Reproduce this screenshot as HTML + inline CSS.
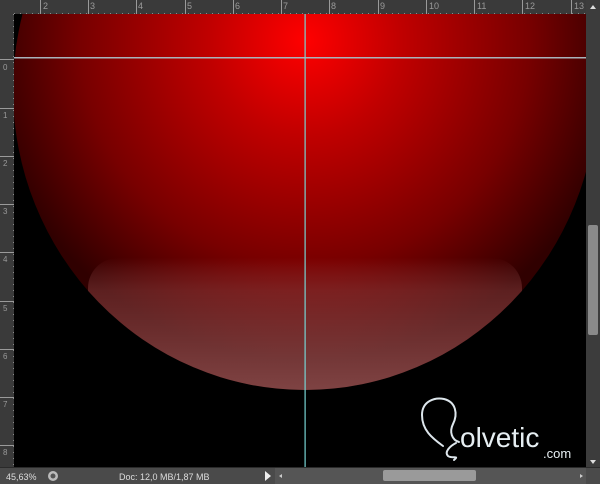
<!DOCTYPE html>
<html><head><meta charset="utf-8"><style>
html,body{margin:0;padding:0;width:600px;height:484px;overflow:hidden;background:#000;font-family:"Liberation Sans",sans-serif}
</style></head><body>
<svg width="600" height="484" viewBox="0 0 600 484" xmlns="http://www.w3.org/2000/svg" style="position:absolute;left:0;top:0">
<defs>
<radialGradient id="rg" cx="305" cy="40" r="320" gradientUnits="userSpaceOnUse">
<stop offset="0" stop-color="#ff0000"/>
<stop offset="0.3" stop-color="#c00000"/>
<stop offset="0.7" stop-color="#780000"/>
<stop offset="1" stop-color="#300000"/>
</radialGradient>
<linearGradient id="ov" x1="0" y1="258" x2="0" y2="390" gradientUnits="userSpaceOnUse">
<stop offset="0" stop-color="#c06060" stop-opacity="0"/>
<stop offset="0.25" stop-color="#a05050" stop-opacity="0.4"/>
<stop offset="1" stop-color="#a06060" stop-opacity="0.7"/>
</linearGradient>
<clipPath id="cc"><rect x="14" y="14" width="572" height="453"/></clipPath>
<clipPath id="el"><ellipse cx="305" cy="90" rx="292" ry="300"/></clipPath>
</defs>
<rect x="14" y="14" width="572" height="453" fill="#000"/>
<g clip-path="url(#cc)">
<ellipse cx="305" cy="90" rx="292" ry="300" fill="url(#rg)"/>
<g clip-path="url(#el)">
<rect x="88" y="258" width="434" height="140" rx="30" fill="url(#ov)"/>
</g>
</g>
<rect x="14" y="57" width="572" height="1.5" fill="#a8b4bc"/>
<rect x="304.5" y="14" width="1.2" height="453" fill="#77d4d4"/>
<rect x="0" y="0" width="600" height="14" fill="#3a3a3a"/>
<rect x="0" y="0" width="14" height="484" fill="#3a3a3a"/>
<g fill="#9a9a9a" font-size="9">
<text x="43" y="9">2</text><text x="90" y="9">3</text><text x="138" y="9">4</text><text x="187" y="9">5</text><text x="235" y="9">6</text><text x="283" y="9">7</text><text x="331" y="9">8</text><text x="380" y="9">9</text><text x="429" y="9">10</text><text x="477" y="9">11</text><text x="525" y="9">12</text><text x="574" y="9">13</text>
</g>
<g stroke="#8a8a8a" stroke-width="1">
<line x1="14" y1="13.5" x2="586" y2="13.5" stroke-dasharray="1 5"/>
<line x1="13.5" y1="14" x2="13.5" y2="467" stroke-dasharray="1 5"/>
</g>
<g stroke="#9a9a9a">
<line x1="40.5" y1="0" x2="40.5" y2="14"/><line x1="88.5" y1="0" x2="88.5" y2="14"/><line x1="136.5" y1="0" x2="136.5" y2="14"/><line x1="185.5" y1="0" x2="185.5" y2="14"/><line x1="233.5" y1="0" x2="233.5" y2="14"/><line x1="281.5" y1="0" x2="281.5" y2="14"/><line x1="329.5" y1="0" x2="329.5" y2="14"/><line x1="378.5" y1="0" x2="378.5" y2="14"/><line x1="426.5" y1="0" x2="426.5" y2="14"/><line x1="474.5" y1="0" x2="474.5" y2="14"/><line x1="522.5" y1="0" x2="522.5" y2="14"/><line x1="571.5" y1="0" x2="571.5" y2="14"/>
<line x1="0" y1="59.5" x2="14" y2="59.5"/><line x1="0" y1="108.5" x2="14" y2="108.5"/><line x1="0" y1="156.5" x2="14" y2="156.5"/><line x1="0" y1="204.5" x2="14" y2="204.5"/><line x1="0" y1="252.5" x2="14" y2="252.5"/><line x1="0" y1="301.5" x2="14" y2="301.5"/><line x1="0" y1="349.5" x2="14" y2="349.5"/><line x1="0" y1="397.5" x2="14" y2="397.5"/><line x1="0" y1="445.5" x2="14" y2="445.5"/>
</g>
<g fill="#9a9a9a" font-size="8">
<text x="3" y="70">0</text><text x="3" y="118">1</text><text x="3" y="166">2</text><text x="3" y="214">3</text><text x="3" y="262">4</text><text x="3" y="311">5</text><text x="3" y="359">6</text><text x="3" y="407">7</text><text x="3" y="455">8</text>
</g>
<rect x="586" y="0" width="14" height="467" fill="#3c3c3c"/>
<path d="M590 9 L593 5 L596 9Z" fill="#ddd"/>
<rect x="588" y="225" width="10" height="110" rx="2" fill="#8a8a8a"/>
<path d="M590 460 L593 464 L596 460Z" fill="#ddd"/>
<rect x="0" y="467" width="600" height="17" fill="#4a4a4a"/>
<rect x="0" y="467" width="600" height="1" fill="#2a2a2a"/>
<text x="6" y="480" font-size="9" fill="#ddd">45,63%</text>
<circle cx="53" cy="476" r="5" fill="#bbb"/><circle cx="53" cy="476" r="2.5" fill="#555"/>
<text x="119" y="480" font-size="9" fill="#ddd">Doc: 12,0 MB/1,87 MB</text>
<path d="M265 471 L271 476 L265 481Z" fill="#eee"/>
<rect x="275" y="468" width="311" height="16" fill="#555"/>
<path d="M282 474 L279 476 L282 478Z" fill="#ccc"/>
<rect x="383" y="470" width="93" height="11" rx="2" fill="#9a9a9a"/>
<path d="M580 474 L583 476 L580 478Z" fill="#ccc"/>
<g fill="none" stroke="#dde6ec" stroke-width="2" stroke-linecap="round">
<path d="M443 446 C432 438 422 430 422 415 C422 401 435 397 444 399 C456 402 458 414 453 424 C449 432 452 440 459 442"/>
<path d="M456 443 C450 446 444 452 448 456 C452 459 460 455 454 460"/>
</g>
<text x="460" y="447" font-size="28" fill="#e6eef2">olvetic</text>
<text x="543" y="458" font-size="13" fill="#e6eef2">.com</text>
</svg>
</body></html>
